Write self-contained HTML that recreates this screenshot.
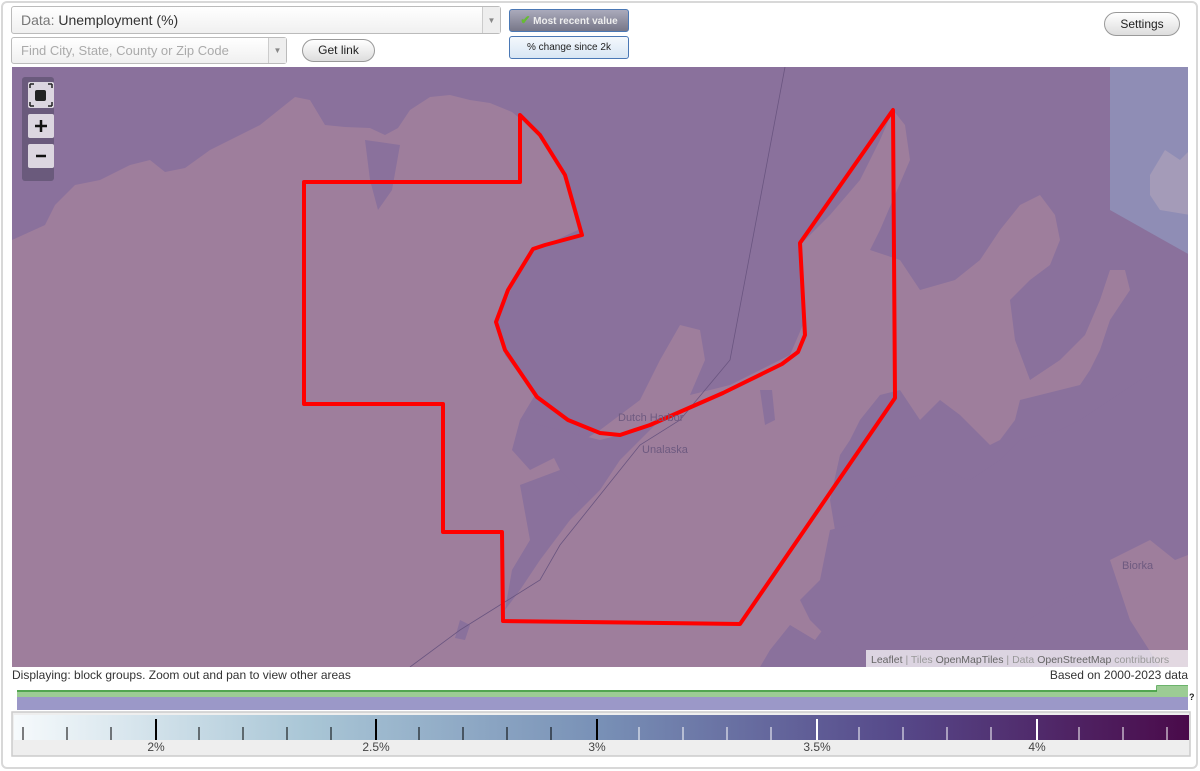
<!DOCTYPE html><html><head><meta charset="utf-8"><style>
*{box-sizing:border-box}
body{margin:0;width:1200px;height:771px;background:#fff;font-family:"Liberation Sans",Arial,sans-serif;position:relative;overflow:hidden}
.frame{position:absolute;left:1px;top:1px;width:1197px;height:768px;border:2px solid #d8d8d8;border-radius:6px}
.sel{position:absolute;background:linear-gradient(#fff,#f0f0f0);border:1px solid #bbb;border-radius:3px;font-size:14px;color:#555}
.arrow{position:absolute;right:0;top:0;bottom:0;width:18px;border-left:1px solid #ccc;background:#eee;color:#888;font-size:8px;text-align:center}
.btn{position:absolute;border:1px solid #999;border-radius:12px;background:linear-gradient(#fff,#ddd);font-size:12px;text-align:center;color:#222}
.tb{position:absolute;border:1px solid #4a78b5;border-radius:3px;font-size:10px;text-align:center}
</style></head><body>
<div class="frame"></div>
<div class="sel" style="left:11px;top:6px;width:490px;height:28px;line-height:27px;padding-left:9px"><span style="color:#777">Data:</span> <span style="color:#333">Unemployment (%)</span><div class="arrow" style="line-height:27px">▼</div></div>
<div class="sel" style="left:11px;top:37px;width:276px;height:27px;line-height:25px;padding-left:9px;font-size:13px;color:#aaa">Find City, State, County or Zip Code<div class="arrow" style="line-height:25px">▼</div></div>
<div class="btn" style="left:302px;top:39px;width:73px;height:23px;line-height:21px">Get link</div>
<div class="tb" style="left:509px;top:9px;width:120px;height:23px;line-height:21px;background:linear-gradient(#aab,#778);color:#eee;font-weight:bold"><span style="color:#6b3;font-size:12px">✔</span> Most recent value</div>
<div class="tb" style="left:509px;top:36px;width:120px;height:23px;line-height:21px;background:linear-gradient(#f4f8fc,#d8e6f4);color:#222">% change since 2k</div>
<div class="btn" style="left:1104px;top:12px;width:76px;height:24px;line-height:22px">Settings</div>

<svg style="position:absolute;left:0;top:0" width="1200" height="771">
<defs><clipPath id="c"><rect x="12" y="67" width="1176" height="600"/></clipPath></defs>
<g clip-path="url(#c)">
<rect x="12" y="67" width="1176" height="600" fill="#8a719c"/>
<polygon points="1110,67 1190,67 1190,255 1110,210" fill="#8f8db5"/>
<polygon points="1150,175 1165,150 1180,160 1190,150 1190,215 1160,210 1150,195" fill="#a49bb8"/>
<path fill="#9e7e9c" d="M12,240 L45,225 L55,205 L75,185 L100,180 L130,165 L150,160 L165,172 L185,168 L210,150 L230,140 L260,125 L295,97 L310,100 L325,125 L345,127 L370,128 L385,135 L398,128 L410,110 L430,97 L450,95 L470,100 L490,103 L512,112 L540,135 L565,175 L578,230 L545,245 L530,250 L515,280 L498,320 L505,355 L535,395 L520,420 L512,450 L530,470 L560,455 L600,430 L640,400 L660,360 L680,325 L700,330 L705,360 L690,395 L730,385 L790,355 L805,320 L800,245 L830,215 L860,180 L880,140 L893,110 L905,125 L910,160 L895,195 L880,230 L870,250 L900,260 L920,290 L955,280 L980,260 L1000,230 L1020,205 L1040,195 L1055,215 L1060,240 L1050,265 L1030,280 L1010,300 L1015,340 L1030,380 L1060,360 L1085,335 L1100,300 L1110,270 L1125,270 L1130,290 L1110,320 L1100,350 L1090,370 L1080,385 L1020,400 L1015,420 L1000,440 L990,445 L960,415 L940,400 L920,420 L900,390 L880,395 L860,420 L850,440 L840,455 L830,500 L835,530 L830,580 L830,620 L815,640 L790,625 L770,650 L760,667 L12,667 Z"/>
<path fill="#8a719c" d="M365,140 L400,145 L392,190 L378,210 L370,180 Z"/>
<path fill="#8a719c" d="M520,420 L545,440 L560,470 L550,500 L540,520 L560,530 L600,490 L620,460 L640,440 L660,420 L640,430 L600,440 Z"/>
<path fill="#8a719c" d="M830,530 L870,520 L900,480 L940,470 L970,480 L1000,460 L1020,440 L1060,430 L1080,420 L1110,400 L1140,380 L1188,360 L1188,667 L1180,667 L1160,610 L1130,570 L1110,560 L1090,590 L1060,600 L1020,625 L1000,667 L860,667 L830,640 L810,620 L800,600 L820,580 Z"/>
<path fill="#9e7e9c" d="M1110,560 L1150,540 L1175,560 L1188,555 L1188,667 L1160,667 L1130,620 Z"/>
<path fill="#8a719c" d="M520,485 L560,470 L580,490 L570,520 L540,560 L520,590 L505,610 L512,570 L530,540 Z"/>
<path fill="#8a719c" d="M760,390 L772,390 L775,420 L765,425 Z"/>
<path fill="#8a719c" d="M460,620 L470,625 L465,640 L455,638 Z"/>
<polyline fill="none" stroke="#6a5580" stroke-width="0.8" points="785,67 730,360 680,420 640,445 612,480 560,545 540,580 500,605 460,630 410,667"/>
<polygon fill="none" stroke="#ff0000" stroke-width="4" stroke-linejoin="round" points="304,182 520,182 520,115 540,135 565,175 582,235 545,245 533,249 508,290 496,322 505,350 537,397 568,420 600,433 620,435 650,425 723,393 782,364 798,352 805,335 800,243 893,110 895,398 740,624 503,621 502,532 443,532 443,404 304,404"/>
<text x="618" y="421" font-size="11" fill="#6e5a80" font-family="Liberation Sans">Dutch Harbor</text>
<text x="642" y="453" font-size="11" fill="#6e5a80" font-family="Liberation Sans">Unalaska</text>
<text x="1122" y="569" font-size="11" fill="#6e5a80" font-family="Liberation Sans">Biorka</text>
<rect x="866" y="650" width="322" height="17" fill="rgba(255,255,255,0.7)"/>
<text x="871" y="663" font-size="10.5" fill="#999" font-family="Liberation Sans"><tspan fill="#666">Leaflet</tspan> | Tiles <tspan fill="#666">OpenMapTiles</tspan> | Data <tspan fill="#666">OpenStreetMap</tspan> contributors</text>
</g>
<rect x="22" y="77" width="32" height="104" rx="3" fill="#6a5a7c"/>
<rect x="28" y="82" width="26" height="26" rx="2" fill="#dcd6e0"/>
<rect x="35" y="90" width="11" height="11" rx="2" fill="#222"/>
<path d="M30,84h4M30,84v4M52,84h-4M52,84v4M30,106h4M30,106v-4M52,106h-4M52,106v-4" stroke="#222" stroke-width="1.5"/>
<rect x="28" y="114" width="26" height="24" rx="2" fill="#dcd6e0"/>
<path d="M41,120v12M35,126h12" stroke="#111" stroke-width="2.5"/>
<rect x="28" y="144" width="26" height="24" rx="2" fill="#dcd6e0"/>
<path d="M36,156h10" stroke="#111" stroke-width="2.5"/>
<rect x="17" y="690" width="1171" height="7" fill="#9ccc94"/>
<path d="M17,691 H1157 V686 H1188" stroke="#3a9a3a" stroke-width="1.5" fill="none"/>
<rect x="1157" y="686" width="31" height="11" fill="#9ccc94"/>
<rect x="17" y="697" width="1171" height="13" fill="#9b98c8"/>
<text x="1189" y="700" font-size="9" font-weight="bold" fill="#222">?</text>
<defs><linearGradient id="g" x1="0" x2="1"><stop offset="0" stop-color="#f6fafc"/><stop offset="0.25" stop-color="#a9c6d6"/><stop offset="0.5" stop-color="#7890b6"/><stop offset="0.75" stop-color="#56498a"/><stop offset="1" stop-color="#4a0a4a"/></linearGradient></defs>
<rect x="12" y="712" width="1178" height="44" fill="#eee" stroke="#ccc" stroke-width="1.5"/>
<rect x="14" y="715" width="1175" height="25" fill="url(#g)"/>
<g stroke-width="1">
<path d="M23,727v13M67,727v13M111,727v13M199,727v13M243,727v13M287,727v13M331,727v13M419,727v13M463,727v13M507,727v13M551,727v13" stroke="#000"/>
<path d="M639,727v13M683,727v13M727,727v13M771,727v13M859,727v13M903,727v13M947,727v13M991,727v13M1079,727v13M1123,727v13M1167,727v13" stroke="#fff"/>
<path d="M156,719v21M376,719v21M597,719v21" stroke="#000" stroke-width="2"/>
<path d="M817,719v21M1037,719v21" stroke="#fff" stroke-width="2"/>
</g>
<g font-size="12" fill="#444" text-anchor="middle"><text x="156" y="751">2%</text><text x="376" y="751">2.5%</text><text x="597" y="751">3%</text><text x="817" y="751">3.5%</text><text x="1037" y="751">4%</text></g>
<text x="12" y="679" font-size="12" fill="#333">Displaying: block groups. Zoom out and pan to view other areas</text>
<text x="1188" y="679" font-size="12" fill="#333" text-anchor="end">Based on 2000-2023 data</text>
</svg>
</body></html>
